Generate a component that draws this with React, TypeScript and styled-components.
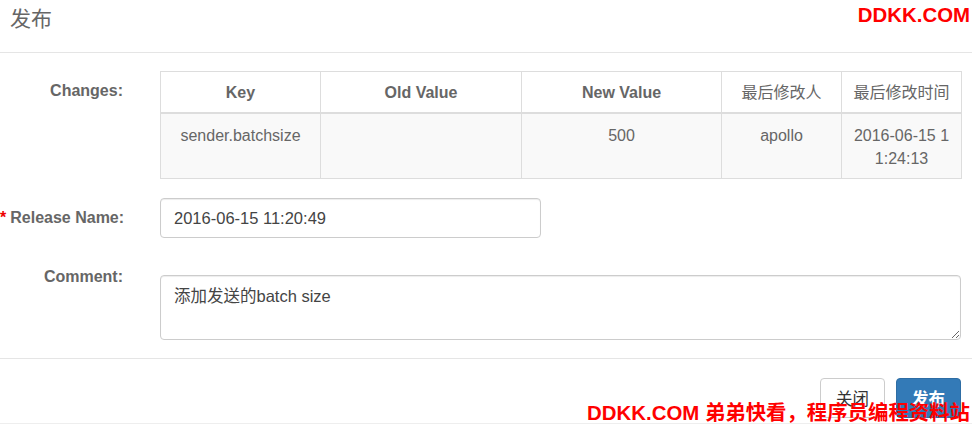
import React from "react";
import styled, { createGlobalStyle } from "styled-components";

const FONT = `"Liberation Sans", "Noto Sans CJK SC", sans-serif`;

const Global = createGlobalStyle`
  html, body { margin: 0; padding: 0; background: #fff; }
  body { font-family: ${FONT}; color: #555; }
  * { box-sizing: border-box; }
`;

const Modal = styled.div`
  position: relative;
  width: 972px;
  height: 425px;
  display: flex;
  flex-direction: column;
  background: #fff;
  overflow: hidden;
`;

const Header = styled.div`
  height: 53px;
  padding: 6px 10px 0;
  border-bottom: 1px solid #e5e5e5;
`;

const Title = styled.h4`
  margin: 0;
  font-size: 21px;
  line-height: 26px;
  font-weight: normal;
  color: #666;
`;

const Body = styled.div`
  padding: 18px 11px 18px 0;
  display: flex;
  flex-direction: column;
  gap: 19px;
`;

const Row = styled.div`
  display: grid;
  grid-template-columns: 123px 1fr;
  column-gap: 37px;
  align-items: start;
`;

const Label = styled.label`
  text-align: right;
  font-size: 16px;
  line-height: 23px;
  padding-top: 8px;
  font-weight: bold;
  color: #666;
  white-space: nowrap;
`;

const Star = styled.span`
  color: #e00;
  margin-right: 4px;
`;

const Table = styled.table`
  width: 801px;
  border-collapse: collapse;
  table-layout: fixed;
  font-size: 16px;
  color: #666;
`;

const Th = styled.th<{ $w: number; $cjk?: boolean }>`
  width: ${(p) => p.$w}px;
  padding: 9px 10px 8px;
  line-height: 23px;
  border: 1px solid #ddd;
  border-bottom: 2px solid #ddd;
  text-align: center;
  font-weight: ${(p) => (p.$cjk ? "normal" : "bold")};
  color: #666;
  background: #fff;
`;

const Td = styled.td`
  padding: 10px 10px 8px;
  line-height: 23px;
  border: 1px solid #ddd;
  text-align: center;
  vertical-align: top;
  background: #f9f9f9;
  word-break: break-all;
`;

const Input = styled.input`
  display: block;
  width: 381px;
  height: 40px;
  padding: 0 13px;
  font-family: ${FONT};
  font-size: 16.5px;
  color: #444;
  border: 1px solid #ccc;
  border-radius: 4px;
  box-shadow: inset 0 1px 1px rgba(0, 0, 0, 0.075);
  outline: none;
`;

const TextArea = styled.textarea`
  display: block;
  width: 801px;
  height: 65px;
  margin-top: 18px;
  padding: 9px 13px;
  font-family: ${FONT};
  font-size: 16.5px;
  line-height: 23px;
  color: #444;
  border: 1px solid #ccc;
  border-radius: 4px;
  box-shadow: inset 0 1px 1px rgba(0, 0, 0, 0.075);
  outline: none;
  resize: vertical;
`;

const Footer = styled.div`
  border-top: 1px solid #e5e5e5;
  border-bottom: 1px solid #eee;
  padding: 19px 11px 5px;
  display: flex;
  justify-content: flex-end;
  gap: 11px;
`;

const Button = styled.button<{ $primary?: boolean }>`
  height: 40px;
  width: 65px;
  border-radius: 4px;
  font-family: ${FONT};
  font-size: 16.5px;
  cursor: pointer;
  border: 1px solid ${(p) => (p.$primary ? "#2e6da4" : "#ccc")};
  background: ${(p) => (p.$primary ? "#337ab7" : "#fff")};
  color: ${(p) => (p.$primary ? "#fff" : "#333")};
  font-weight: ${(p) => (p.$primary ? "bold" : "normal")};
`;

const Watermark = styled.div<{ $pos: "top" | "bottom" }>`
  position: absolute;
  right: 2px;
  ${(p) => (p.$pos === "top" ? "top: 3px;" : "bottom: 0px;")}
  color: #ff0000;
  font-family: "Liberation Sans", "Noto Sans CJK SC", sans-serif;
  font-weight: bold;
  font-size: 20.4px;
  line-height: 24px;
  white-space: nowrap;
`;

const columns = [
  { name: "Key", w: 160 },
  { name: "Old Value", w: 201 },
  { name: "New Value", w: 200 },
  { name: "最后修改人", w: 120, cjk: true },
  { name: "最后修改时间", w: 120, cjk: true },
];

const rows = [["sender.batchsize", "", "500", "apollo", "2016-06-15 11:24:13"]];

export default function App() {
  return (
    <Modal>
      <Global />
      <Header>
        <Title>发布</Title>
      </Header>
      <Body>
        <Row>
          <Label>Changes:</Label>
          <Table>
            <thead>
              <tr>
                {columns.map((c) => (
                  <Th key={c.name} $w={c.w} $cjk={c.cjk}>
                    {c.name}
                  </Th>
                ))}
              </tr>
            </thead>
            <tbody>
              {rows.map((r, i) => (
                <tr key={i}>
                  {r.map((v, j) => (
                    <Td key={j}>{v}</Td>
                  ))}
                </tr>
              ))}
            </tbody>
          </Table>
        </Row>
        <Row>
          <Label>
            <Star>*</Star>Release Name:
          </Label>
          <Input readOnly value="2016-06-15 11:20:49" />
        </Row>
        <Row>
          <Label>Comment:</Label>
          <TextArea readOnly defaultValue="添加发送的batch size" />
        </Row>
      </Body>
      <Footer>
        <Button>关闭</Button>
        <Button $primary>发布</Button>
      </Footer>
      <Watermark $pos="top">DDKK.COM</Watermark>
      <Watermark $pos="bottom">DDKK.COM 弟弟快看，程序员编程资料站</Watermark>
    </Modal>
  );
}
